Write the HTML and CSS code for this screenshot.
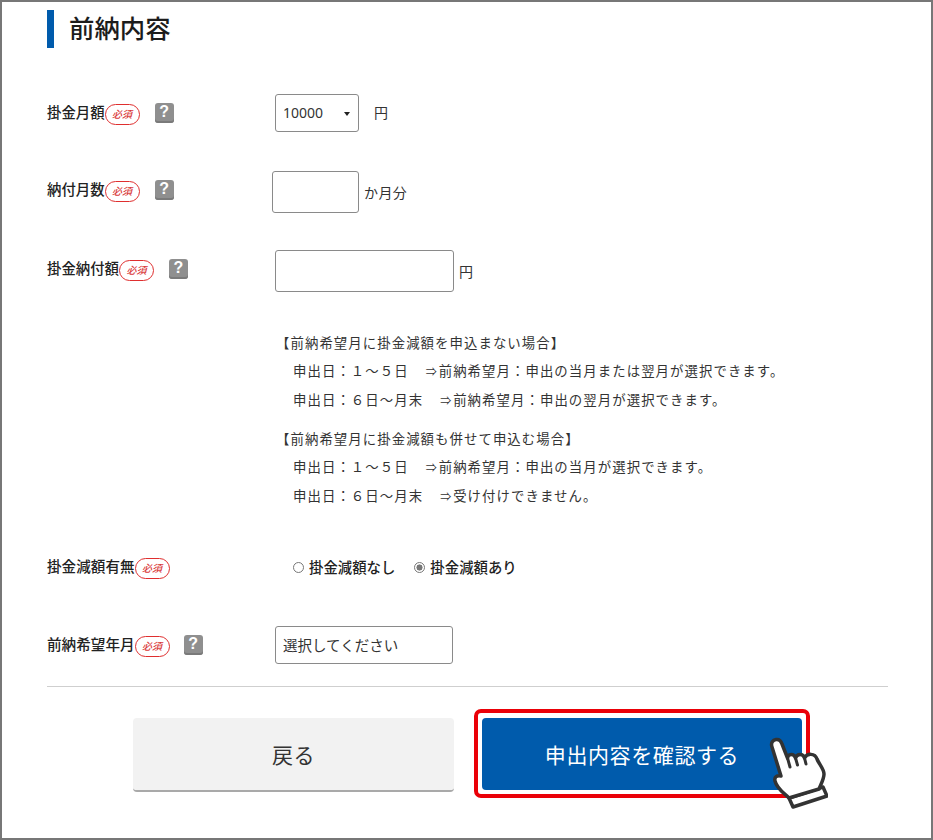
FILE: index.html
```html
<!DOCTYPE html>
<html lang="ja">
<head>
<meta charset="utf-8">
<title>前納内容</title>
<link rel="stylesheet" href="styles.css">
</head>
<body>
<main class="frame">
  <h2 class="heading">前納内容</h2>

  <div class="row row-amount">
    <div class="label-group"><span class="label">掛金月額</span><span class="badge">必須</span><span class="help">?</span></div>
    <div class="select-wrap"><select class="select"><option>10000</option></select></div>
    <span class="unit unit-wide">円</span>
  </div>

  <div class="row row-months">
    <div class="label-group lifted"><span class="label">納付月数</span><span class="badge">必須</span><span class="help">?</span></div>
    <input class="field field-short" type="text">
    <span class="unit">か月分</span>
  </div>

  <div class="row row-total">
    <div class="label-group lifted"><span class="label">掛金納付額</span><span class="badge">必須</span><span class="help">?</span></div>
    <input class="field field-long" type="text">
    <span class="unit">円</span>
  </div>

  <section class="notes">
    <p class="note-head">【前納希望月に掛金減額を申込まない場合】</p>
    <p class="note-line">申出日：１～５日<span class="arrow">⇒</span>前納希望月：申出の当月または翌月が選択できます。</p>
    <p class="note-line">申出日：６日～月末<span class="arrow">⇒</span>前納希望月：申出の翌月が選択できます。</p>
    <p class="note-head second">【前納希望月に掛金減額も併せて申込む場合】</p>
    <p class="note-line">申出日：１～５日<span class="arrow">⇒</span>前納希望月：申出の当月が選択できます。</p>
    <p class="note-line">申出日：６日～月末<span class="arrow">⇒</span>受け付けできません。</p>
  </section>

  <div class="row row-radio">
    <div class="label-group"><span class="label">掛金減額有無</span><span class="badge">必須</span></div>
    <div class="radios">
      <label class="radio"><input type="radio" name="reduce">掛金減額なし</label>
      <label class="radio"><input type="radio" name="reduce" checked>掛金減額あり</label>
    </div>
  </div>

  <div class="row row-month">
    <div class="label-group"><span class="label">前納希望年月</span><span class="badge">必須</span><span class="help">?</span></div>
    <input class="field field-month" type="text" value="選択してください">
  </div>

  <hr class="rule">

  <div class="actions">
    <button class="btn btn-back" type="button">戻る</button>
    <div class="highlight">
      <button class="btn btn-next" type="button">申出内容を確認する</button>
      <svg class="hand" viewBox="0 0 60 76" width="60" height="76" aria-hidden="true">
        <path d="M21 62 L55 51 L59 60 L25 71 Z" fill="#fff" stroke="#333" stroke-width="3.5" stroke-linejoin="round"/>
        <path d="M4 11 C2.500 6.500 5 4 8 3.500 C11 3 13 5 14 8 L19.500 22 C20 17.500 26 17 27.500 22 C29 17.500 35 17 36.500 22 C39 17 47 17 49 23 C51 28 56 33 56 38 C56 43 53 48 51 53 L21 62 C16 57 9 53 7 45 C6 41 9 39 13 40 Z" fill="#fff" stroke="#333" stroke-width="3.5" stroke-linejoin="round"/>
        <path d="M19.500 22 L22 31 M27.500 22 L29.500 29 M36.500 22 L38 28" fill="none" stroke="#333" stroke-width="3" stroke-linecap="round"/>
      </svg>
    </div>
  </div>
</main>
</body>
</html>
```
FILE: styles.css
```css
* { box-sizing: border-box; }
html, body { margin: 0; padding: 0; background: #fff; }
body {
  font-family: "Noto Sans CJK JP", "Noto Sans", sans-serif;
  color: #222;
}
p { margin: 0; }

.frame {
  width: 933px;
  height: 840px;
  border: 2px solid #777;
  padding: 8px 43px 0 45px;
  overflow: hidden;
}

.heading {
  margin: 0;
  height: 38px;
  border-left: 7px solid #005bac;
  padding-left: 15px;
  font-size: 25.400px;
  font-weight: 500;
  line-height: 34px;
  color: #1c1c1c;
}

.row { display: flex; align-items: center; }
.row-amount { height: 38px; margin-top: 46px; }
.row-months { height: 42px; margin-top: 39px; }
.row-total { height: 42px; margin-top: 37px; }
.row-radio { height: 24px; margin-top: 45px; }
.row-month { height: 38px; margin-top: 47px; }

.label-group {
  display: flex;
  align-items: center;
  width: 228px;
  flex: none;
}
.lifted { margin-bottom: 4px; }
.row-months .label-group { width: 225px; }

.label {
  position: relative;
  top: -1px;
  font-size: 14.400px;
  font-weight: 500;
  line-height: 20px;
  white-space: nowrap;
}
.row-radio .label, .row-month .label { font-size: 14.600px; }

.badge {
  display: block;
  width: 35px;
  height: 21px;
  margin-top: 3px;
  flex: none;
  border: 1.700px solid #df2f2f;
  border-radius: 11px;
  background: #fff;
  color: #d93a3a;
  font-size: 10px;
  font-style: italic;
  font-weight: 500;
  line-height: 17px;
  text-align: center;
}

.help {
  display: block;
  width: 19px;
  height: 20px;
  margin-left: 15px;
  flex: none;
  border-radius: 3px;
  background: #8f8f8f;
  box-shadow: inset 0 -2px 0 #7a7a7a;
  color: #fff;
  font-family: "Liberation Sans", sans-serif;
  font-size: 16px;
  font-weight: 700;
  line-height: 18px;
  text-align: center;
}
.row-month .help { margin-left: 14px; }

.select-wrap {
  position: relative;
  width: 84px;
  height: 38px;
  flex: none;
}
.select-wrap::after {
  content: "";
  position: absolute;
  top: 18px;
  right: 9px;
  border-style: solid;
  border-width: 4px 3.500px 0;
  border-color: #222 transparent transparent;
  pointer-events: none;
}
.select {
  display: block;
  width: 100%;
  height: 100%;
  appearance: none;
  border: 1px solid #8a8a8a;
  border-radius: 3px;
  background: #fff;
  color: #333;
  padding: 0 0 2px 7px;
  font-family: "Noto Sans", sans-serif;
  font-size: 14px;
}

.field {
  display: block;
  flex: none;
  border: 1px solid #8a8a8a;
  border-radius: 3px;
  background: #fff;
  color: #333;
  padding: 0 7px;
  font-family: inherit;
  font-size: 14.500px;
}
.field-short { width: 87px; height: 42px; }
.field-long { width: 179px; height: 42px; }
.field-month { width: 178px; height: 38px; padding-bottom: 2px; }

.unit {
  margin-left: 5px;
  font-size: 14px;
  line-height: 20px;
  color: #333;
  letter-spacing: 0.400px;
}
.unit-wide { margin-left: 15px; margin-bottom: 2px; }

.notes {
  margin-top: 36px;
  margin-left: 229px;
  font-size: 13.400px;
  color: #333;
  letter-spacing: 1.070px;
  white-space: nowrap;
}
.note-head { line-height: 28px; }
.note-line { padding-left: 17px; line-height: 29px; }
.second { margin-top: 10px; }
.arrow {
  display: inline-block;
  width: 13px;
  margin-left: 17px;
  font-size: 11px;
  line-height: 1;
  letter-spacing: 0;
}

.radios { display: flex; gap: 19px; margin-left: 18px; }
.radio {
  display: flex;
  align-items: center;
  font-size: 14.400px;
  font-weight: 500;
  line-height: 20px;
  color: #222;
}
.radio input {
  appearance: none;
  width: 11px;
  height: 11px;
  margin: 0 5px 0 0;
  border: 1px solid #777;
  border-radius: 50%;
  background: #fff;
}
.radio input:checked {
  background: radial-gradient(circle, #777 0 2.800px, #fff 3.300px);
}

.rule {
  margin: 22px 0 0;
  height: 1px;
  border: 0;
  background: #cfcfcf;
}

.actions {
  display: flex;
  align-items: flex-start;
  gap: 20px;
  margin-top: 22px;
  padding-left: 86px;
}
.btn {
  display: block;
  flex: none;
  border: 0;
  font-family: inherit;
  font-size: 21px;
  letter-spacing: 0.600px;
  cursor: pointer;
}
.btn-back {
  width: 321px;
  height: 74px;
  margin-top: 9px;
  border-bottom: 2px solid #a9a9a9;
  border-radius: 4px;
  background: #f2f2f2;
  color: #333;
}
.highlight {
  position: relative;
  width: 336px;
  height: 89px;
  padding: 5px 4px 0;
  border: 4px solid #ea0008;
  border-radius: 7px;
  background: #fff;
}
.btn-next {
  width: 320px;
  height: 72px;
  border-radius: 4px;
  background: #005bac;
  color: #fff;
}
.hand {
  position: absolute;
  left: 290px;
  top: 23px;
  display: block;
}
```
